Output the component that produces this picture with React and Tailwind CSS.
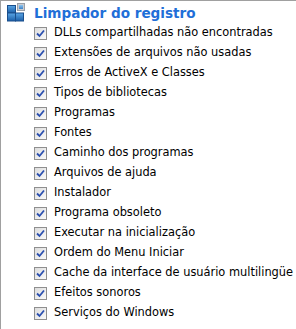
import React from 'react';

const items = [
  'DLLs compartilhadas não encontradas',
  'Extensões de arquivos não usadas',
  'Erros de ActiveX e Classes',
  'Tipos de bibliotecas',
  'Programas',
  'Fontes',
  'Caminho dos programas',
  'Arquivos de ajuda',
  'Instalador',
  'Programa obsoleto',
  'Executar na inicialização',
  'Ordem do Menu Iniciar',
  'Cache da interface de usuário multilingüe',
  'Efeitos sonoros',
  'Serviços do Windows',
];

const RegistryIcon = () => (
  <svg width="18" height="19" viewBox="0 0 18 19" className="shrink-0">
    <defs>
      <linearGradient id="blk" x1="0" y1="0" x2="0" y2="1">
        <stop offset="0" stopColor="#5aa6e6" />
        <stop offset="1" stopColor="#1c5fa8" />
      </linearGradient>
      <linearGradient id="blk2" x1="0" y1="0" x2="0" y2="1">
        <stop offset="0" stopColor="#8cc4f0" />
        <stop offset="1" stopColor="#3d82c8" />
      </linearGradient>
    </defs>
    <rect x="10.5" y="0.5" width="7" height="7" fill="#c8ccd2" stroke="#9aa0a8" />
    <rect x="12" y="2" width="4" height="4" fill="url(#blk2)" />
    <rect x="0.5" y="2.5" width="8" height="7.5" fill="url(#blk)" stroke="#1a4f8c" />
    <rect x="0.5" y="10" width="8" height="8" fill="url(#blk)" stroke="#1a4f8c" />
    <rect x="8.5" y="10" width="8" height="8" fill="url(#blk)" stroke="#1a4f8c" />
  </svg>
);

const CheckBox = () => (
  <span className="flex h-[13px] w-[13px] shrink-0 items-center justify-center border border-[#8f8f8f] bg-gradient-to-br from-[#dcdcdc] to-[#fbfbfb]">
    <svg width="9" height="9" viewBox="0 0 9 9">
      <path d="M1 4.5 L3.5 7 L8 1.5" fill="none" stroke="#2a4fb0" strokeWidth="1.8" />
    </svg>
  </span>
);

export default function App() {
  return (
    <div className="h-[329px] w-[296px] overflow-hidden border-l border-t border-[#a0a0a0] bg-white font-['Tahoma','DejaVu_Sans',sans-serif] text-[11.4px] text-black">
      <div className="flex h-[22px] items-center gap-[9px] pl-[6px]">
        <RegistryIcon />
        <span className="mt-[3px] text-[13.6px] font-bold text-[#1f6fd8]">Limpador do registro</span>
      </div>
      <ul className="pl-[33px]">
        {items.map((label) => (
          <li key={label} className="flex h-[20px] items-center gap-[7px]">
            <CheckBox />
            <span className="whitespace-nowrap">{label}</span>
          </li>
        ))}
      </ul>
    </div>
  );
}
